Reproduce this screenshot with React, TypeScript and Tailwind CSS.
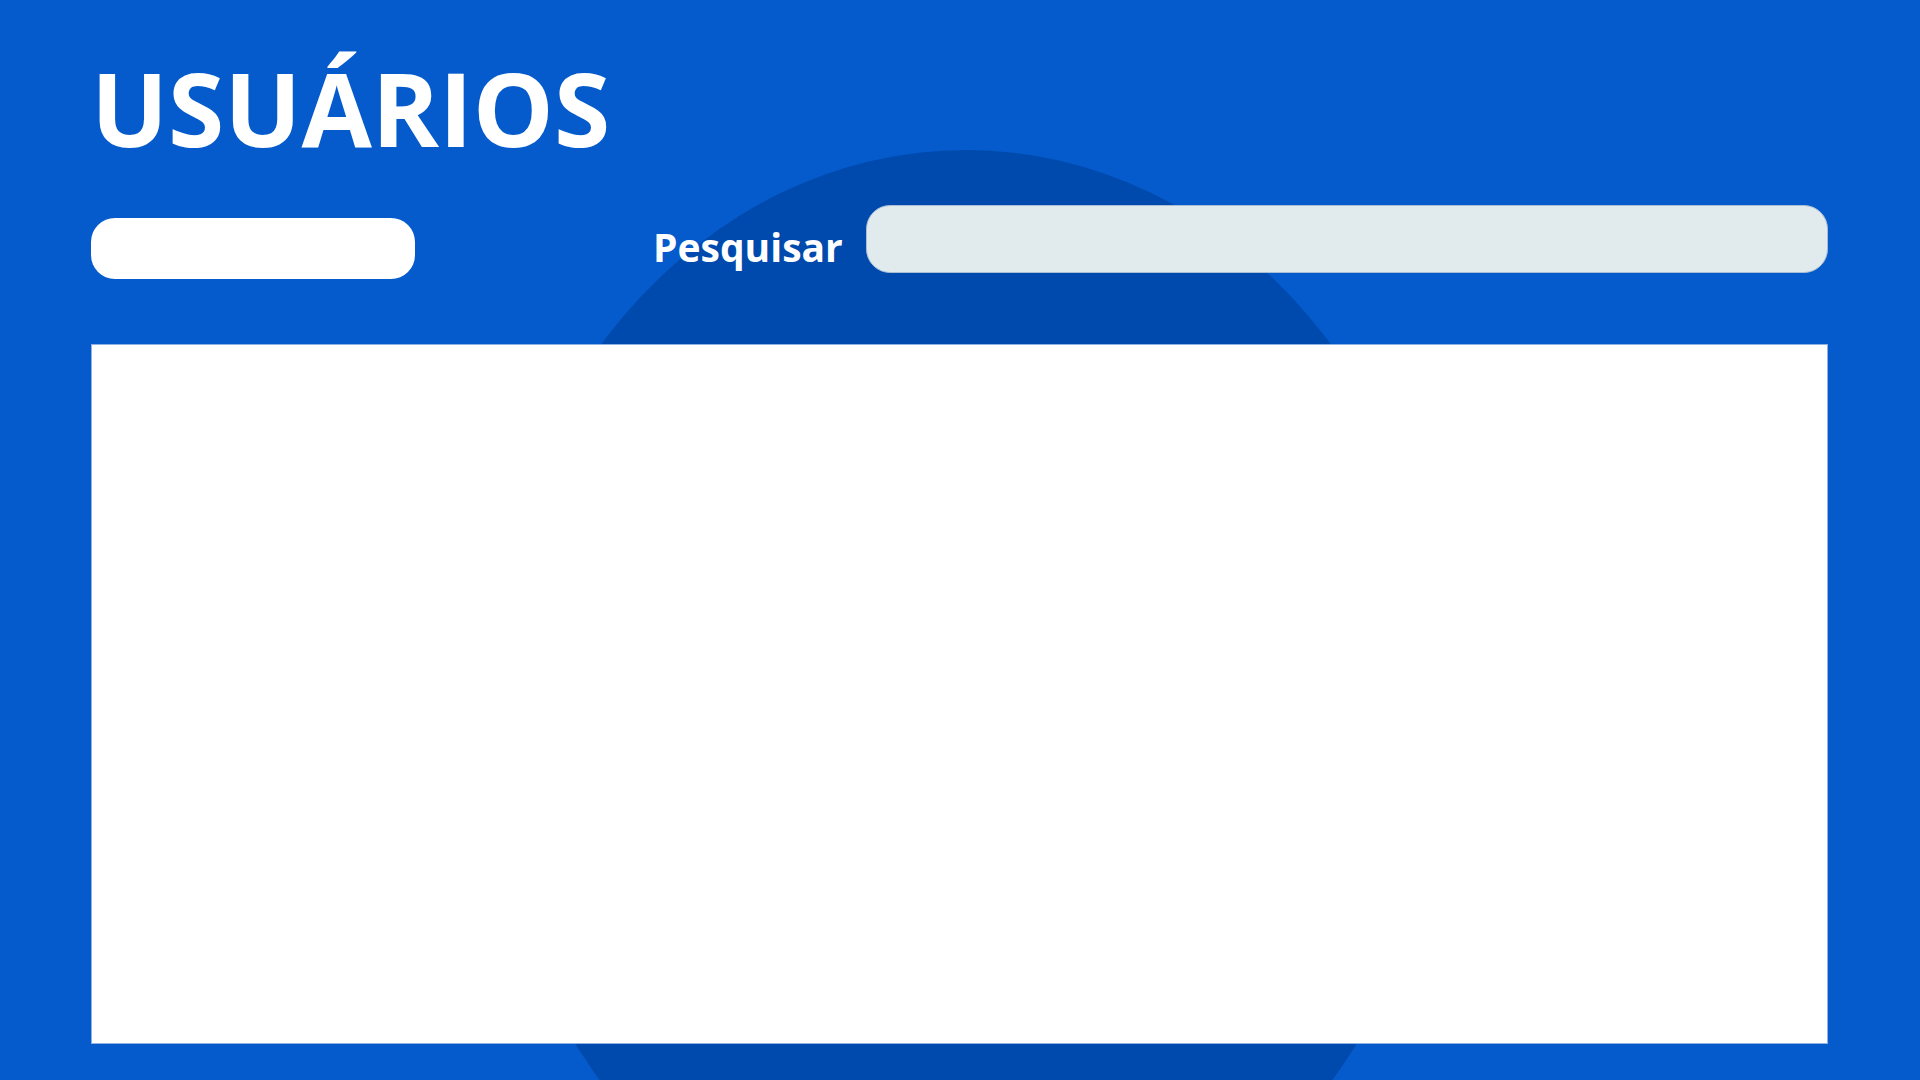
export default function App() {
  return (
    <div
      className="relative w-full h-[1080px] overflow-hidden bg-[#055bcc]"
      style={{ fontFamily: '"Open Sans", "Noto Sans", sans-serif' }}
    >
      {/* decorative backdrop */}
      <div className="absolute left-[483px] top-[150px] w-[966px] h-[1126px] rounded-[50%] bg-[#004aad]" />

      <div className="relative flex flex-col pl-[91px] pr-[92px] pt-[57px]">
        <h1 className="text-[102px] leading-none font-bold text-white">USUÁRIOS</h1>

        <div className="flex items-start mt-[46px]">
          <div className="mt-[13px] w-[324px] h-[61px] shrink-0 rounded-[24px] bg-white" />
          <label className="ml-[238px] mt-[22px] shrink-0 text-[39px] leading-none font-bold text-white">
            Pesquisar
          </label>
          <input
            type="text"
            className="ml-auto w-[962px] h-[68px] shrink-0 rounded-[24px] border border-[#a9bdd6] bg-[#e1eaed] px-6 outline-none"
          />
        </div>

        <div className="mt-[65px] h-[700px] border border-[#8fb0e3] bg-white" />
      </div>
    </div>
  );
}
